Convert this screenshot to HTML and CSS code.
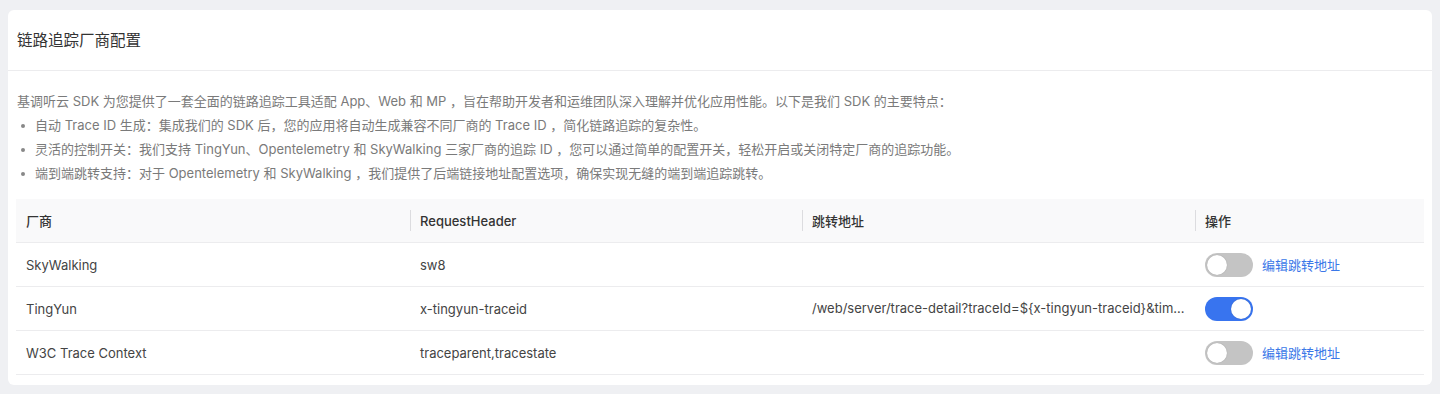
FILE: index.html
```html
<!DOCTYPE html>
<html lang="zh-CN">
<head>
    <meta charset="UTF-8"/>
    <meta name="viewport" content="width=device-width, initial-scale=1.0"/>
    <title>链路追踪厂商配置</title>
    <link rel="stylesheet" href="styles.css">
</head>
<body>
    <div class="card">
        <div class="card-header">链路追踪厂商配置</div>
        <div class="card-body">
            <div class="intro">
                <p>基调听云 SDK 为您提供了一套全面的链路追踪工具适配 App、Web 和 MP ，旨在帮助开发者和运维团队深入理解并优化应用性能。以下是我们 SDK 的主要特点：</p>
                <ul>
                    <li>自动 Trace ID 生成：集成我们的 SDK 后，您的应用将自动生成兼容不同厂商的 Trace ID ，简化链路追踪的复杂性。</li>
                    <li>灵活的控制开关：我们支持 TingYun、Opentelemetry 和 SkyWalking 三家厂商的追踪 ID ，您可以通过简单的配置开关，轻松开启或关闭特定厂商的追踪功能。</li>
                    <li>端到端跳转支持：对于 Opentelemetry 和 SkyWalking ，我们提供了后端链接地址配置选项，确保实现无缝的端到端追踪跳转。</li>
                </ul>
            </div>

            <div class="table">
                <div class="row head">
                    <div class="cell">厂商</div>
                    <div class="cell sep">RequestHeader</div>
                    <div class="cell sep">跳转地址</div>
                    <div class="cell sep">操作</div>
                </div>
                <div class="row">
                    <div class="cell">SkyWalking</div>
                    <div class="cell">sw8</div>
                    <div class="cell"></div>
                    <div class="cell actions">
                        <span class="switch"></span>
                        <a class="link">编辑跳转地址</a>
                    </div>
                </div>
                <div class="row">
                    <div class="cell">TingYun</div>
                    <div class="cell">x-tingyun-traceid</div>
                    <div class="cell ellipsis" title="/web/server/trace-detail?traceId=${x-tingyun-traceid}&amp;timestamp=${timestamp}">/web/server/trace-detail?traceId=${x-tingyun-traceid}&amp;tim...</div>
                    <div class="cell actions">
                        <span class="switch on"></span>
                    </div>
                </div>
                <div class="row">
                    <div class="cell">W3C Trace Context</div>
                    <div class="cell">traceparent,tracestate</div>
                    <div class="cell"></div>
                    <div class="cell actions">
                        <span class="switch"></span>
                        <a class="link">编辑跳转地址</a>
                    </div>
                </div>
            </div>
        </div>
    </div>
</body>
</html>
```

FILE: styles.css
```css
body {
    margin: 0;
    padding: 10px 8px;
    background-color: #eff0f3;
    font-family: Inter, "Noto Sans CJK SC", sans-serif;
    color: #333;
}
.card {
    background-color: #fff;
    border-radius: 6px;
}
.card-header {
    height: 60px;
    line-height: 62px;
    padding: 0 9px;
    font-size: 15.5px;
    color: #333;
    border-bottom: 1px solid #ececee;
}
.card-body {
    padding: 18px 8px 10px;
}
.intro {
    font-size: 13px;
    line-height: 24px;
    color: #7a7a7a;
    padding-left: 1px;
}
.intro p {
    margin: 0;
}
.intro ul {
    margin: 0;
    padding: 0;
    list-style: none;
}
.intro li {
    position: relative;
    padding-left: 18px;
}
.intro li::before {
    content: "";
    position: absolute;
    left: 4px;
    top: 11px;
    width: 4px;
    height: 4px;
    border-radius: 50%;
    background-color: #888;
}
.table {
    margin-top: 14px;
    font-size: 13px;
}
.row {
    display: grid;
    grid-template-columns: 394px 392px 393px 1fr;
    height: 44px;
    border-bottom: 1px solid #ececee;
    box-sizing: border-box;
}
.row.head {
    height: 44px;
    background-color: #f9f9fa;
    font-weight: 500;
}
.cell {
    display: flex;
    align-items: center;
    padding: 0 10px;
    color: #444;
    min-width: 0;
}
.head .cell {
    color: #333;
}
.cell.sep {
    border-left: 1px solid #dcdcdf;
    padding-left: 9px;
    margin: 11px 0;
}
.ellipsis {
    display: block;
    line-height: 43px;
    white-space: nowrap;
    overflow: hidden;
}
.actions {
    gap: 9px;
}
.switch {
    position: relative;
    width: 48px;
    height: 24px;
    border-radius: 12px;
    background-color: #c4c4c4;
    flex-shrink: 0;
}
.switch::after {
    content: "";
    position: absolute;
    top: 2px;
    left: 2px;
    width: 20px;
    height: 20px;
    border-radius: 50%;
    background-color: #fff;
    box-shadow: 0 0 1px rgba(0, 0, 0, 0.3);
}
.switch.on {
    background-color: #3874ef;
}
.switch.on::after {
    left: 26px;
}
.link {
    color: #3a78e8;
    cursor: pointer;
}
```
